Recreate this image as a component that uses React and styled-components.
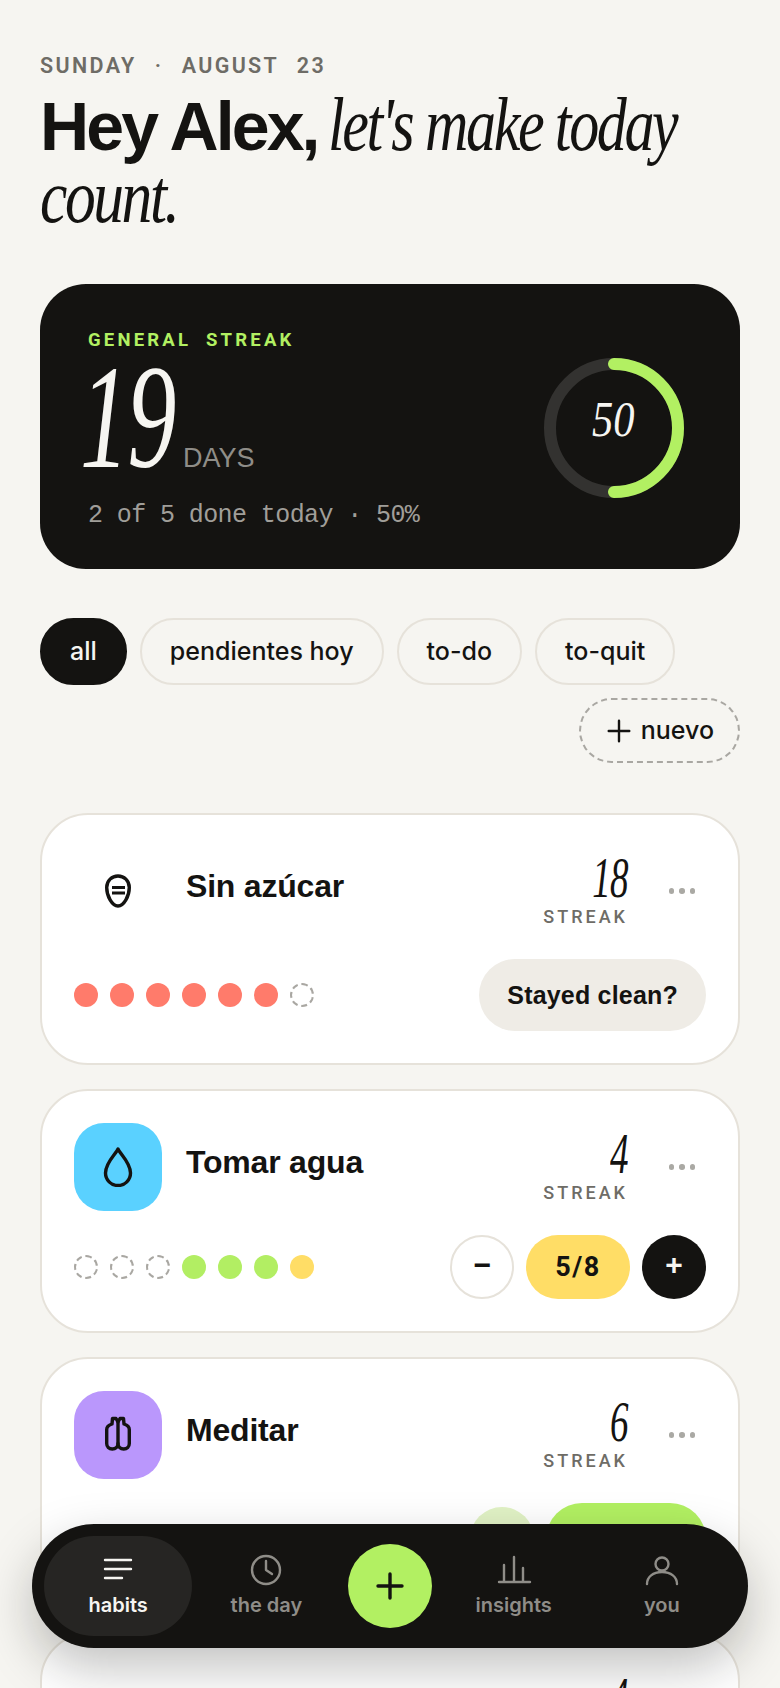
import React from 'react'
import styled, { createGlobalStyle } from 'styled-components'

const ink = '#141311'
const paper = '#F6F5F1'
const line = '#E6E2DA'
const lime = '#B2F062'
const muted = '#6E6C66'
const sans = '"Liberation Sans", Arial, sans-serif'
const ui = 'Inter, "Liberation Sans", sans-serif'
const label = 'Roboto, "Liberation Sans", sans-serif'
const mono = '"Liberation Mono", "DejaVu Sans Mono", monospace'
const serif = '"Liberation Serif", "Times New Roman", serif'

const GlobalStyle = createGlobalStyle`
  html, body {
    margin: 0;
    padding: 0;
    background: ${paper};
    overflow: hidden;
  }
  * { box-sizing: border-box; }
`

const Screen = styled.div`
  position: relative;
  width: 780px;
  height: 100vh;
  padding: 54px 40px 0;
  overflow: hidden;
  color: ${ink};
  font-family: ${sans};
`

const DateLine = styled.div`
  font: 600 21.5px/24px ${label};
  letter-spacing: 2.35px;
  word-spacing: 10.5px;
  color: ${muted};
  white-space: pre;
`

const Heading = styled.h1`
  margin: 11px 0 0;
  font: 700 68px/70px ${sans};
  letter-spacing: -2.9px;
  white-space: nowrap;
`

const Condensed = styled.span`
  display: inline-block;
  font-family: ${serif};
  font-style: italic;
  font-weight: 400;
  transform: scaleX(${p => p.$x});
  transform-origin: left center;
`

const HeadSerif = styled(Condensed)`
  margin-left: ${p => p.$shift || 0}px;
  font-size: 76px;
  letter-spacing: -3px;
`

const Hero = styled.section`
  margin-top: 51px;
  height: 285px;
  padding: 46px 56px 0 48px;
  display: flex;
  justify-content: space-between;
  border-radius: 46px;
  background: ${ink};
  color: ${paper};
`

const HeroLabel = styled.div`
  font: 700 18.5px/20px ${label};
  letter-spacing: 3.2px;
  word-spacing: 7px;
  color: ${lime};
`

const HeroCount = styled.div`
  display: flex;
  align-items: flex-end;
  height: 124px;
`

const HeroNumber = styled(Condensed)`
  width: 103px;
  margin-left: -8px;
  font-size: 148px;
  line-height: 114px;
  letter-spacing: -2px;
`

const HeroUnit = styled.span`
  font: 400 27px/32px ${sans};
  color: #8F8D88;
`

const HeroNote = styled.div`
  margin-top: 27px;
  font: 400 25px/30px ${mono};
  letter-spacing: -0.6px;
  color: #A09E99;
  white-space: pre;
`

const Ring = styled.div`
  position: relative;
  width: 140px;
  height: 140px;
  margin-top: 28px;
`

const RingValue = styled(Condensed)`
  position: absolute;
  left: 48px;
  top: 31px;
  font-size: 50px;
  line-height: 60px;
`

const Filters = styled.div`
  margin-top: 49px;
  display: flex;
  flex-wrap: wrap;
  gap: 13px;
`

const Chip = styled.div`
  height: 67px;
  padding: 0 28px;
  display: flex;
  align-items: center;
  gap: 10px;
  border: 2.5px solid ${p => (p.$active ? ink : line)};
  border-radius: 34px;
  background: ${p => (p.$active ? ink : 'transparent')};
  color: ${p => (p.$active ? paper : ink)};
  font: 500 25px/1 ${ui};
`

const NewChip = styled(Chip)`
  height: 65px;
  margin-left: auto;
  padding: 0 24px 0 26px;
  border: 2px dashed #A9A7A2;
`

const List = styled.div`
  margin-top: 50px;
  display: flex;
  flex-direction: column;
  gap: 24px;
`

const Card = styled.article`
  padding: 32px;
  border: 2.5px solid ${line};
  border-radius: 48px;
  background: #fff;
`

const TopRow = styled.div`
  display: flex;
  align-items: center;
  margin-bottom: 24px;
`

const IconBox = styled.div`
  flex: none;
  width: 88px;
  height: 88px;
  display: flex;
  align-items: center;
  justify-content: center;
  border-radius: 30px;
  background: ${p => p.$color || 'transparent'};
`

const Title = styled.h2`
  flex: 1;
  margin: 0 0 10px 24px;
  font: 700 32px/40px ${sans};
  letter-spacing: -0.2px;
`

const Streak = styled.div`
  width: 90px;
  margin-bottom: 6px;
  display: flex;
  flex-direction: column;
  align-items: flex-end;
`

const StreakNumber = styled.div`
  height: 56px;
  font: italic 400 58px/56px ${serif};
  letter-spacing: -1px;
  transform: scaleX(0.64);
  transform-origin: right center;
`

const StreakLabel = styled.div`
  margin-top: 2px;
  font: 500 18px/18px ${label};
  letter-spacing: 3px;
  color: ${muted};
`

const Menu = styled.div`
  width: 48px;
  margin-left: 30px;
  display: flex;
  justify-content: center;
  gap: 5px;
`

const MenuDot = styled.i`
  width: 5.5px;
  height: 5.5px;
  border-radius: 50%;
  background: #AAA9A4;
`

const BottomRow = styled.div`
  display: flex;
  align-items: center;
  justify-content: space-between;
`

const Dots = styled.div`
  display: flex;
  gap: 12px;
`

const Dot = styled.i`
  width: 24px;
  height: 24px;
  border-radius: 50%;
  background: ${p => p.$color || 'transparent'};
  border: ${p => (p.$color ? 'none' : '2px dashed #A9A7A2')};
`

const Controls = styled.div`
  display: flex;
  align-items: center;
  gap: 12px;
`

const ActionPill = styled.div`
  height: 72px;
  min-width: ${p => p.$minWidth || '0'};
  padding: 0 28px;
  display: flex;
  align-items: center;
  border-radius: 36px;
  background: ${p => p.$bg || '#EFECE6'};
  font: 700 25px/1 ${sans};
  letter-spacing: 0.2px;
`

const RoundButton = styled.div`
  width: 64px;
  height: 64px;
  display: flex;
  align-items: center;
  justify-content: center;
  border-radius: 50%;
  border: ${p => (p.$bg ? 'none' : `2.5px solid ${line}`)};
  background: ${p => p.$bg || '#fff'};
  color: ${p => p.$fg || ink};
  font: 700 30px/1 ${mono};
`

const Counter = styled.div`
  width: 104px;
  height: 64px;
  display: flex;
  align-items: center;
  justify-content: center;
  border-radius: 32px;
  background: #FFDD66;
  font: 700 27px/1 ${label};
  letter-spacing: 1.5px;
`

const BottomNav = styled.nav`
  position: absolute;
  left: 32px;
  right: 32px;
  bottom: 40px;
  height: 124px;
  padding: 12px;
  display: grid;
  grid-template-columns: 1fr 1fr 99px 1fr 1fr;
  border-radius: 62px;
  background: ${ink};
  box-shadow: 0 20px 50px rgba(20, 19, 17, 0.26);
`

const Tab = styled.div`
  display: flex;
  flex-direction: column;
  align-items: center;
  padding-top: 16px;
  border-radius: 50px;
  background: ${p => (p.$active ? '#262523' : 'transparent')};
  color: ${p => (p.$active ? paper : '#8F8D88')};
  font: 600 20px/24px ${ui};
`

const TabIcon = styled.svg`
  width: 36px;
  height: 36px;
  margin-bottom: 5px;
  fill: none;
  stroke: currentColor;
  stroke-width: 2.4;
  stroke-linecap: round;
  stroke-linejoin: round;
`

const AddButton = styled.div`
  align-self: center;
  justify-self: center;
  width: 84px;
  height: 84px;
  display: flex;
  align-items: center;
  justify-content: center;
  border-radius: 50%;
  background: ${lime};
`

const GlyphSvg = styled.svg`
  width: 40px;
  height: 40px;
  fill: none;
  stroke: ${ink};
  stroke-width: 3.4;
  stroke-linecap: round;
  stroke-linejoin: round;
`

const PlusIcon = ({ size = 28, width = 3.4, color = ink }) => (
  <svg width={size} height={size} viewBox="0 0 28 28" fill="none" stroke={color} strokeWidth={width} strokeLinecap="round">
    <path d="M14 2v24M2 14h24" />
  </svg>
)

const SugarIcon = () => (
  <GlyphSvg viewBox="0 0 40 40" strokeWidth="3.8">
    <path d="M20 5C26 5 31.3 9.5 31.3 16.5C31.3 25 26 35 20 35C14 35 8.7 25 8.7 16.5C8.7 9.5 14 5 20 5Z" />
    <path d="M14 16.5h13M14 22h13" strokeLinecap="butt" strokeWidth="3" />
  </GlyphSvg>
)

const DropIcon = () => (
  <GlyphSvg viewBox="0 0 40 40">
    <path d="M20 2C22.5 7.5 32.5 15.5 32.5 26A12.5 12.5 0 0 1 7.5 26C7.5 15.5 17.5 7.5 20 2Z" />
  </GlyphSvg>
)

const MeditateIcon = () => (
  <GlyphSvg viewBox="0 0 40 40">
    <path d="M20 7L18 3.5H14.5L14 9C11 10 8.7 11.5 8.7 14.5V28.5C8.7 32 11 34 14.3 34C17.6 34 20 32 20 28.5V7Z" />
    <path d="M20 7L22 3.5H25.5L26 9C29 10 31.3 11.5 31.3 14.5V28.5C31.3 32 29 34 25.7 34C22.4 34 20 32 20 28.5" />
  </GlyphSvg>
)

const CardHead = ({ icon, color, title, streak }) => (
  <TopRow>
    <IconBox $color={color}>{icon}</IconBox>
    <Title>{title}</Title>
    <Streak>
      <StreakNumber>{streak}</StreakNumber>
      <StreakLabel>STREAK</StreakLabel>
    </Streak>
    <Menu>
      <MenuDot />
      <MenuDot />
      <MenuDot />
    </Menu>
  </TopRow>
)

const coral = '#FF7B6B'
const green = '#B2EE63'
const sun = '#FFDD66'

const DotRow = ({ colors }) => (
  <Dots>
    {colors.map((c, i) => <Dot key={i} $color={c} />)}
  </Dots>
)

export default function App() {
  return (
    <Screen>
      <GlobalStyle />
      <DateLine>SUNDAY · AUGUST 23</DateLine>
      <Heading>
        <div>Hey Alex, <HeadSerif $x={0.79} $shift={-6}>let's make today</HeadSerif></div>
        <HeadSerif $x={0.81}>count.</HeadSerif>
      </Heading>

      <Hero>
        <div>
          <HeroLabel>GENERAL STREAK</HeroLabel>
          <HeroCount>
            <HeroNumber $x={0.66}>19</HeroNumber>
            <HeroUnit>DAYS</HeroUnit>
          </HeroCount>
          <HeroNote>2 of 5 done today · 50%</HeroNote>
        </div>
        <Ring>
          <svg width="140" height="140" viewBox="0 0 140 140" fill="none" strokeWidth="12">
            <circle cx="70" cy="70" r="64" stroke="#333230" />
            <path d="M70 6a64 64 0 0 1 0 128" stroke={lime} strokeLinecap="round" />
          </svg>
          <RingValue $x={0.85}>50</RingValue>
        </Ring>
      </Hero>

      <Filters>
        <Chip $active>all</Chip>
        <Chip>pendientes hoy</Chip>
        <Chip>to-do</Chip>
        <Chip>to-quit</Chip>
        <NewChip><PlusIcon size={24} width={2.8} />nuevo</NewChip>
      </Filters>

      <List>
        <Card>
          <CardHead icon={<SugarIcon />} title="Sin azúcar" streak="18" />
          <BottomRow>
            <DotRow colors={[coral, coral, coral, coral, coral, coral, null]} />
            <ActionPill>Stayed clean?</ActionPill>
          </BottomRow>
        </Card>
        <Card>
          <CardHead icon={<DropIcon />} color="#5AD1FF" title="Tomar agua" streak="4" />
          <BottomRow>
            <DotRow colors={[null, null, null, green, green, green, sun]} />
            <Controls>
              <RoundButton>−</RoundButton>
              <Counter>5/8</Counter>
              <RoundButton $bg={ink} $fg={paper}>+</RoundButton>
            </Controls>
          </BottomRow>
        </Card>
        <Card>
          <CardHead icon={<MeditateIcon />} color="#BA97FC" title="Meditar" streak="6" />
          <BottomRow>
            <DotRow colors={[null, null, null, null, null, null, null]} />
            <Controls>
              <RoundButton $bg="#E1F2C5" />
              <ActionPill $bg={lime} $minWidth="160px" />
            </Controls>
          </BottomRow>
        </Card>
        <Card>
          <CardHead streak="4" />
        </Card>
      </List>

      <BottomNav>
        <Tab $active>
          <TabIcon viewBox="0 0 36 36">
            <path d="M5 8h26M5 17h26M5 26h17" />
          </TabIcon>
          habits
        </Tab>
        <Tab>
          <TabIcon viewBox="0 0 36 36">
            <circle cx="18" cy="18" r="14" />
            <path d="M18 9v9l6 4" />
          </TabIcon>
          the day
        </Tab>
        <AddButton><PlusIcon /></AddButton>
        <Tab>
          <TabIcon viewBox="0 0 36 36" strokeWidth="2">
            <path d="M3 30h31M8 30V13M18 30V5M27 30V16" />
          </TabIcon>
          insights
        </Tab>
        <Tab>
          <TabIcon viewBox="0 0 36 36">
            <circle cx="18" cy="12" r="6.5" />
            <path d="M3 32c0-7 6-12 15-12s15 5 15 12" />
          </TabIcon>
          you
        </Tab>
      </BottomNav>
    </Screen>
  )
}
